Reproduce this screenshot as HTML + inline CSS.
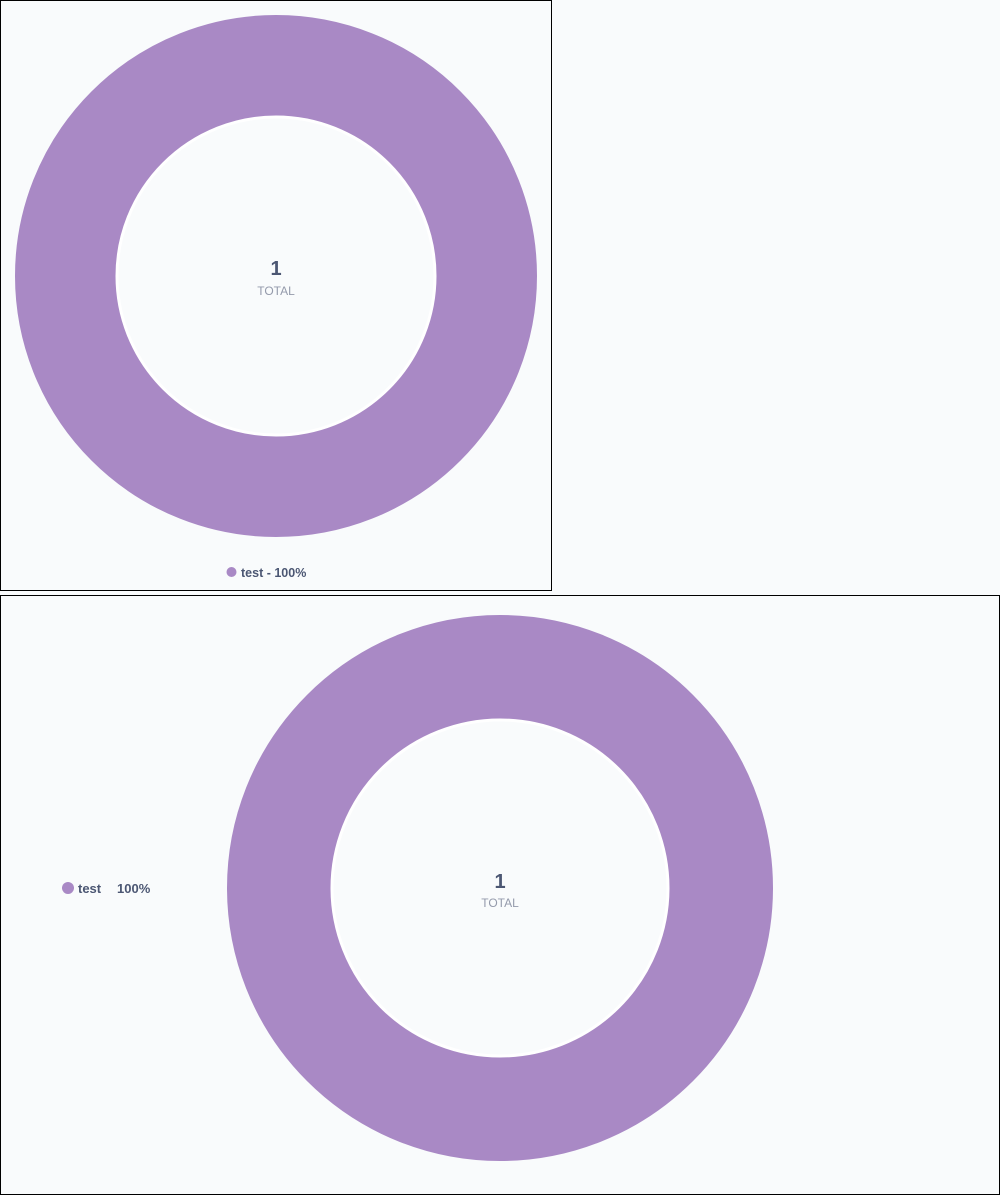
<!DOCTYPE html>
<html><head><style>
body{margin:0;width:1000px;height:1195px;background:#f9fbfc;font-family:"Liberation Sans",sans-serif;position:relative;overflow:hidden}
.box{position:absolute;border:1px solid #000;box-sizing:border-box}
svg{position:absolute;left:0;top:0}
</style></head><body>
<div class="box" style="left:0;top:0;width:552px;height:591px">
<svg width="550" height="589">
<circle cx="275" cy="275" r="210.5" fill="none" stroke="#a989c5" stroke-width="101"/>
<circle cx="275" cy="275" r="159" fill="#f9fbfc" stroke="#fff" stroke-width="3"/>
<text x="275" y="274" text-anchor="middle" font-size="20" font-weight="bold" fill="#4c5773">1</text>
<text x="275" y="294" text-anchor="middle" font-size="12" fill="#949aab">TOTAL</text>
<circle cx="230.5" cy="571" r="5" fill="#a989c5"/>
<text x="240" y="576" font-size="12.5" font-weight="bold" fill="#4c5773">test - 100%</text>
</svg></div>
<div class="box" style="left:0;top:595px;width:1000px;height:600px">
<svg width="998" height="598">
<circle cx="499" cy="292" r="221" fill="none" stroke="#a989c5" stroke-width="104"/>
<circle cx="499" cy="292" r="168" fill="#f9fbfc" stroke="#fff" stroke-width="3"/>
<text x="499" y="292" text-anchor="middle" font-size="20" font-weight="bold" fill="#4c5773">1</text>
<text x="499" y="311" text-anchor="middle" font-size="12" fill="#949aab">TOTAL</text>
<circle cx="67" cy="292" r="6" fill="#a989c5"/>
<text x="77" y="297" font-size="13" font-weight="bold" fill="#4c5773">test</text>
<text x="116" y="297" font-size="13" font-weight="bold" fill="#4c5773">100%</text>
</svg></div>
</body></html>
